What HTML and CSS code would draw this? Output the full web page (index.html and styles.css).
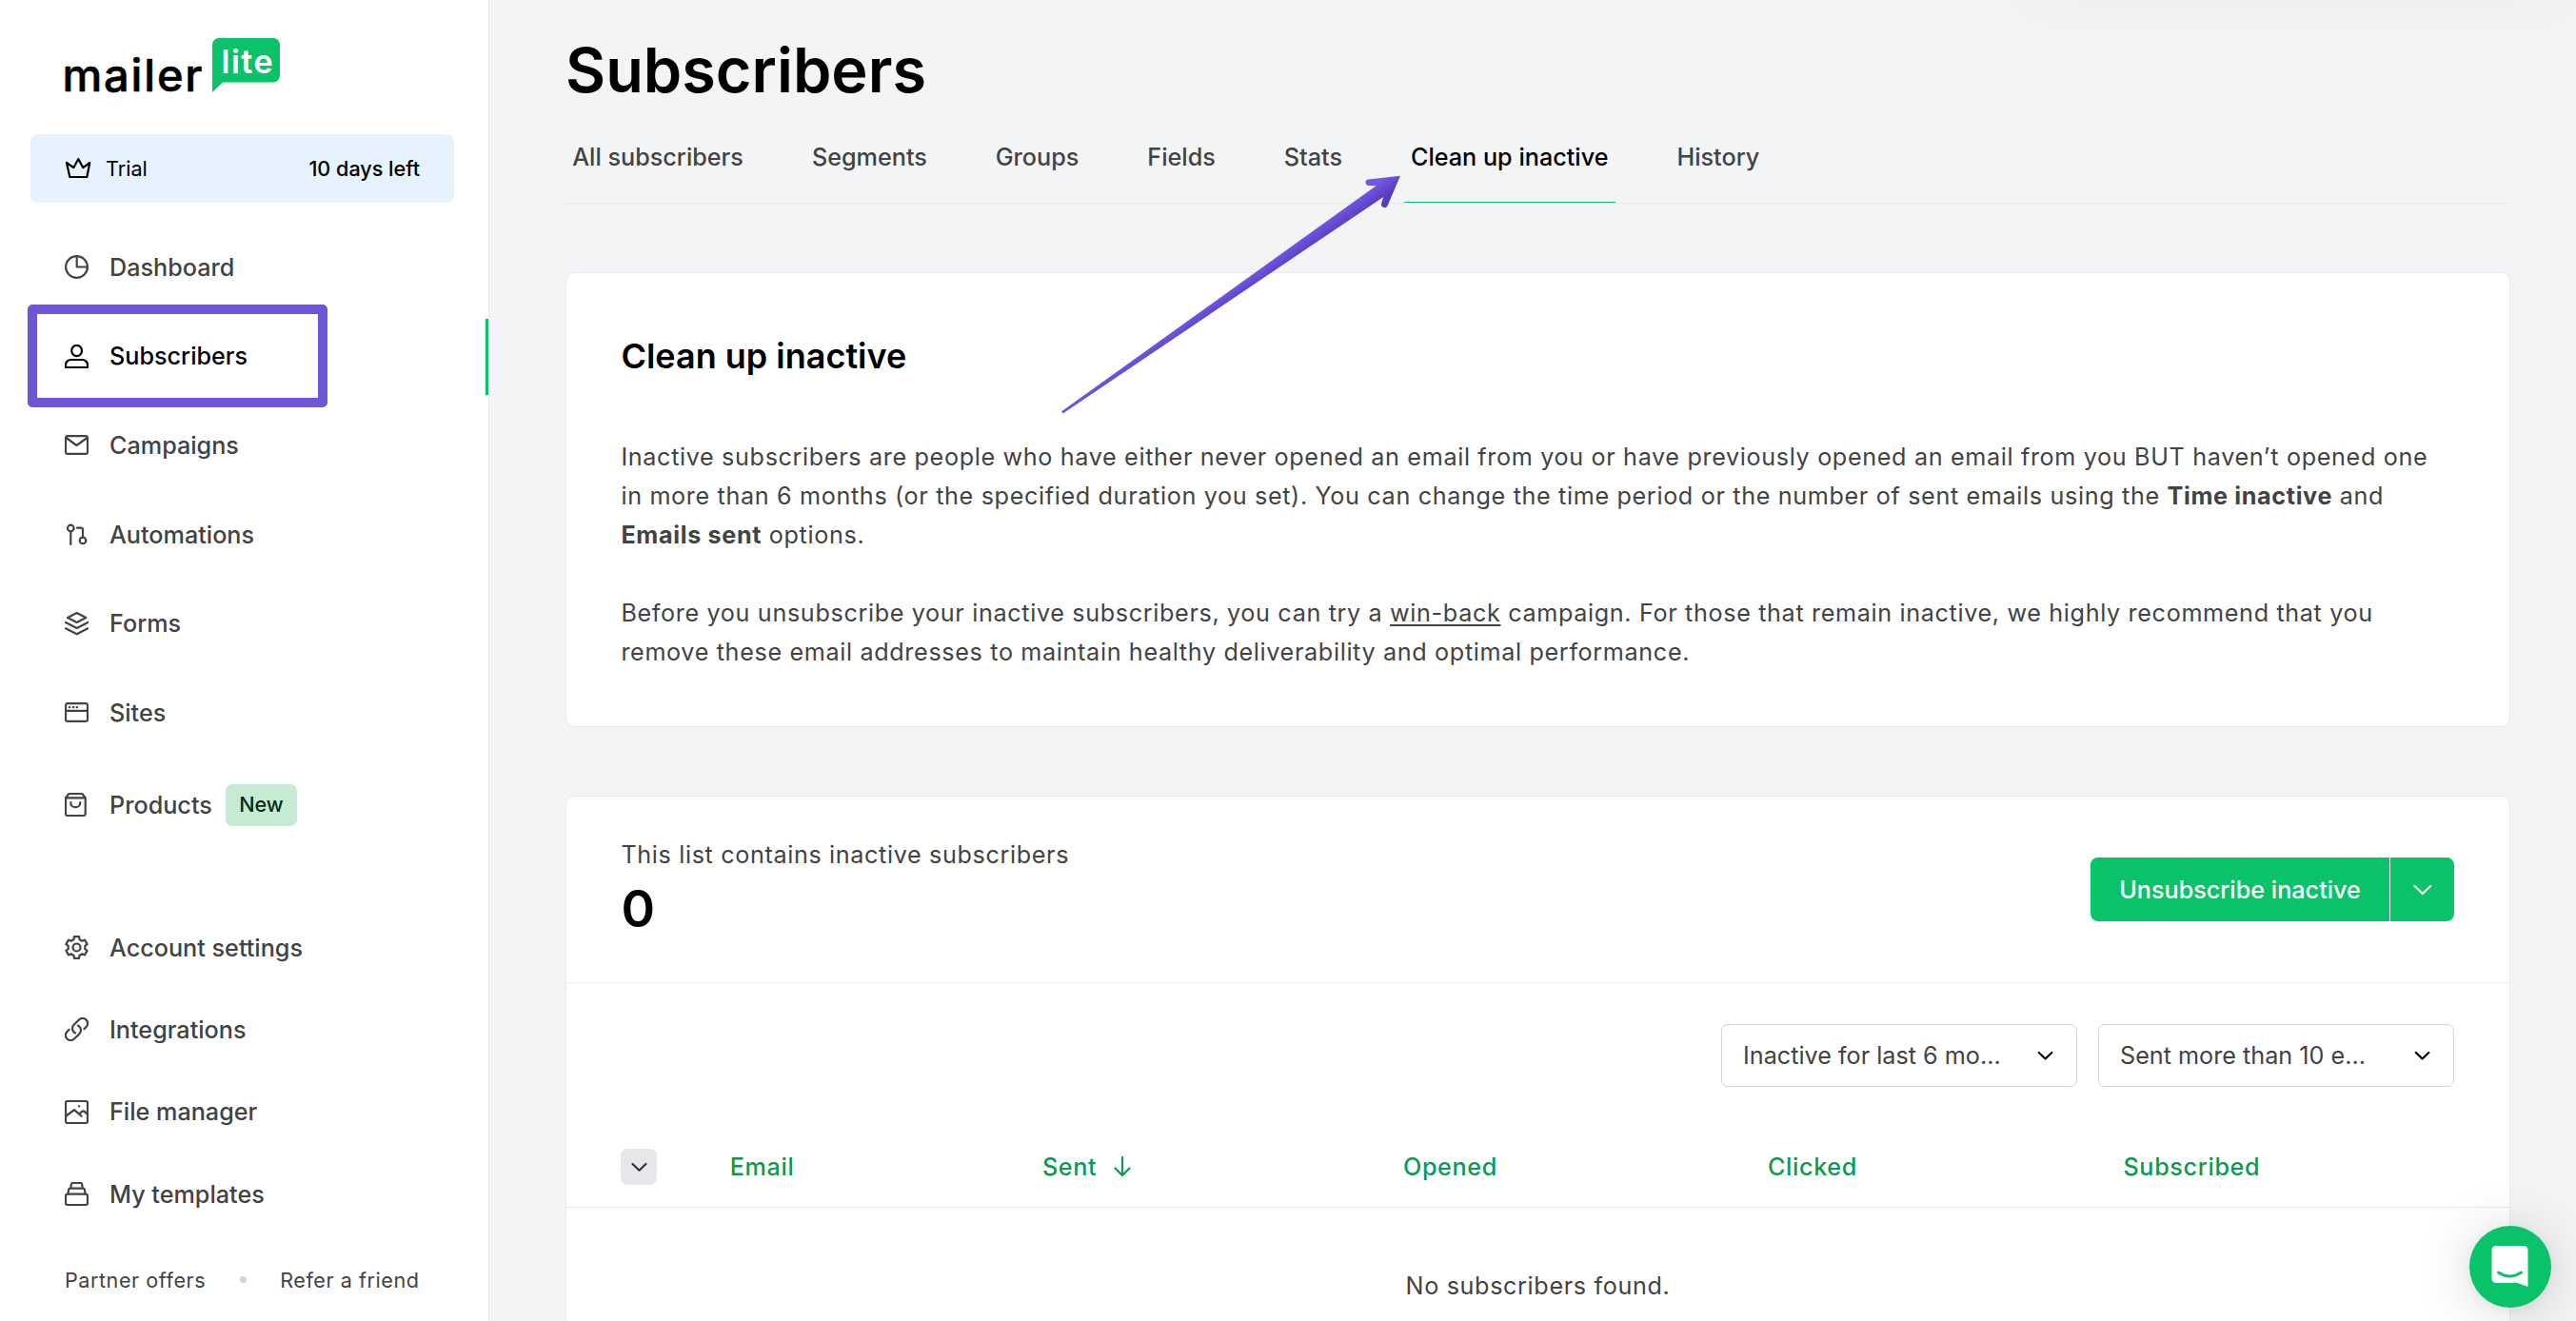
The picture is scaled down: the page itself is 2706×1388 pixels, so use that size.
FILE: index.html
```html
<!DOCTYPE html>
<html lang="en">
<head>
<meta charset="utf-8">
<title>Subscribers – Clean up inactive</title>
<link rel="stylesheet" href="styles.css">
</head>
<body>
<div class="app">
  <aside class="sidebar">
    <svg class="logo" width="240" height="62" viewBox="0 0 240 62" role="img" aria-label="mailerlite">
      <path class="logo-bubble" d="M162 0h57a7 7 0 0 1 7 7v32.500a7 7 0 0 1-7 7H166l-11 10.500V7a7 7 0 0 1 7-7z"/>
      <text class="logo-mailer" x="-2.500" y="56" textLength="147">mailer</text>
      <text class="logo-lite" x="164.500" y="37" textLength="54">lite</text>
    </svg>
    <div class="trial">
      <svg width="28" height="24" viewBox="0 0 28 24" class="icon"><path d="M2 6l3.300 15h18l3-15-7 5.200L14.300 2 9.300 11.200z"/></svg>
      <span class="trial-name">Trial</span>
      <span class="trial-left">10 days left</span>
    </div>
    <nav class="nav">
      <a class="nav-item"><svg class="icon" width="25" height="25" viewBox="0 0 25 25"><circle cx="12.500" cy="12.500" r="11.400"/><path d="M12.700 1.500v11H24"/></svg>Dashboard</a>
      <a class="nav-item active"><svg class="icon" width="25" height="25" viewBox="0 0 25 25"><ellipse cx="12.600" cy="6.500" rx="5.400" ry="5.700"/><path d="M1 24v-2.500a5.500 5.500 0 0 1 5.500-5.500h12a5.500 5.500 0 0 1 5.500 5.500V24z"/></svg>Subscribers<span class="highlight"></span></a>
      <a class="nav-item"><svg class="icon" width="25" height="25" viewBox="0 0 25 25"><rect x="1" y="3.200" width="23" height="18.700" rx="2"/><path d="M1.500 5l11 8 11-8"/></svg>Campaigns</a>
      <a class="nav-item"><svg class="icon" width="25" height="25" viewBox="0 0 25 25"><circle cx="6.300" cy="6" r="3.300"/><path d="M6.300 9.500v13.500M13 5.700h4a2 2 0 0 1 2 2v7.500"/><circle cx="19" cy="18.900" r="3.300"/></svg>Automations</a>
      <a class="nav-item"><svg class="icon" width="25" height="25" viewBox="0 0 25 25"><path d="M12.700 1.100l9.600 5-9.600 4.900L3 6.100zM1 10.900l11.700 6 11.600-6M1 17.300l11.700 6 11.600-6"/></svg>Forms</a>
      <a class="nav-item"><svg class="icon" width="25" height="25" viewBox="0 0 25 25"><rect x="1" y="3.200" width="23" height="18.700" rx="2"/><path d="M1 10.900h23"/><path d="M4.800 7.200h.4M8.800 7.200h.4M12.600 7.200h.4"/></svg>Sites</a>
      <a class="nav-item"><svg class="icon" width="25" height="25" viewBox="0 0 25 25"><path d="M1 5.300L4 1.500Q4.400 1 5 1h12.700q.6 0 1 .5l3 3.800V22a2 2 0 0 1-2 2H3a2 2 0 0 1-2-2zM1 5.300h20.700M6.300 10.200a5 5 0 0 0 10 0"/></svg>Products<span class="badge">New</span></a>
    </nav>
    <nav class="nav nav-secondary">
      <a class="nav-item"><svg class="icon" width="25" height="25" viewBox="0 0 25 25"><path d="M9.600 4L9.900 1.200h5.200L15.400 4l3 1.700 2.600-1.100 2.600 4.500-2.300 1.700v3.400l2.300 1.700-2.600 4.500-2.600-1.100-3 1.700-.3 2.800H9.900L9.600 21l-3-1.700L4 20.400l-2.600-4.500 2.300-1.700v-3.400L1.400 9.100 4 4.600l2.600 1.100z"/><circle cx="12.500" cy="12.500" r="4"/></svg>Account settings</a>
      <a class="nav-item"><svg class="icon" width="25" height="25" viewBox="1.500 1.500 21 21"><path stroke-width="1.850" d="M13.190 8.688a4.500 4.500 0 0 1 1.242 7.244l-4.500 4.500a4.500 4.500 0 0 1-6.364-6.364l1.757-1.757m13.350-.622l1.757-1.757a4.500 4.500 0 0 0-6.364-6.364l-4.500 4.500a4.500 4.500 0 0 0 1.242 7.244"/></svg>Integrations</a>
      <a class="nav-item"><svg class="icon" width="25" height="25" viewBox="0 0 25 25"><rect x="1" y="1" width="23" height="23" rx="2"/><path d="M1.500 16.500L10 10.200l7.500 6.500M15.800 15.200l.8-2.200q2.600-2.600 4.700-.6l2.700 2.600M14.900 6.300h.4"/></svg>File manager</a>
      <a class="nav-item"><svg class="icon" width="25" height="25" viewBox="0 0 25 25"><rect x="1" y="12.700" width="23" height="11.300" rx="2"/><path d="M3.500 12.500l.6-4.600q.3-1.300 1.600-1.300h13.600q1.300 0 1.600 1.300l.6 4.600M6.200 6.300l.6-3.900Q7.100 1 8.400 1h8.200q1.300 0 1.600 1.400l.6 3.900"/></svg>My templates</a>
    </nav>
    <div class="side-links"><a>Partner offers</a><span class="dot"></span><a>Refer a friend</a></div>
  </aside>

  <main class="main">
    <h1 class="title">Subscribers</h1>
    <div class="tabs">
      <a class="tab">All subscribers</a>
      <a class="tab">Segments</a>
      <a class="tab">Groups</a>
      <a class="tab">Fields</a>
      <a class="tab">Stats</a>
      <a class="tab current">Clean up inactive</a>
      <a class="tab">History</a>
    </div>

    <section class="card intro">
      <h2 class="intro-title">Clean up inactive</h2>
      <p class="text">Inactive subscribers are people who have either never opened an email from you or have previously opened an email from you BUT haven’t opened one in more than 6 months (or the specified duration you set). You can change the time period or the number of sent emails using the <b>Time inactive</b> and <b>Emails sent</b> options.</p>
      <p class="text">Before you unsubscribe your inactive subscribers, you can try a <a class="link">win-back</a> campaign. For those that remain inactive, we highly recommend that you remove these email addresses to maintain healthy deliverability and optimal performance.</p>
    </section>

    <section class="card list">
      <header class="list-head">
        <div>
          <div class="list-label">This list contains inactive subscribers</div>
          <div class="count">0</div>
        </div>
        <div class="split-button">
          <button class="btn">Unsubscribe inactive</button>
          <button class="btn btn-toggle" aria-label="More"><svg class="icon" width="20" height="12" viewBox="0 0 20 12"><path d="M1.500 2l8.300 8 8.300-8"/></svg></button>
        </div>
      </header>
      <div class="filters">
        <div class="select"><span>Inactive for last 6 mo...</span><svg class="icon" width="17" height="11" viewBox="0 0 17 11"><path d="M1.800 2l6.800 6.500L15.300 2"/></svg></div>
        <div class="select"><span>Sent more than 10 e...</span><svg class="icon" width="17" height="11" viewBox="0 0 17 11"><path d="M1.800 2l6.800 6.500L15.300 2"/></svg></div>
      </div>
      <div class="table-head">
        <span class="check"><svg class="icon" width="17" height="11" viewBox="0 0 17 11"><path d="M1.500 2l7 6.700L15.500 2"/></svg></span>
        <span>Email</span>
        <span class="sorted">Sent<svg class="icon" width="18" height="22" viewBox="0 0 18 22"><path d="M9 1v19M1.500 12.500L9 20l7.500-7.500"/></svg></span>
        <span>Opened</span>
        <span>Clicked</span>
        <span>Subscribed</span>
      </div>
      <div class="empty">No subscribers found.</div>
    </section>
  </main>
</div>

<div class="top-shade"></div>

<svg class="pointer" width="370" height="262" viewBox="1108 178 370 262">
  <defs>
    <linearGradient id="pointer-fill" gradientUnits="userSpaceOnUse" x1="1444" y1="194" x2="1454" y2="208">
      <stop offset="0" stop-color="#7359e2"/><stop offset="1" stop-color="#583cc0"/>
    </linearGradient>
  </defs>
  <path fill="url(#pointer-fill)" d="M1115.200 432.200L1445.500 195.200l-7.500-.2a3.300 3.300 0 0 1-.3-6.600L1471 184.800l-13.500 31.500a3.500 3.500 0 0 1-6.600-1.800l2.300-7.600L1116.500 434.500z"/>
</svg>

<button class="chat" aria-label="Chat">
  <svg width="86" height="86" viewBox="0 0 86 86">
    <path fill="#fff" d="M28 21h29a4.500 4.500 0 0 1 4.500 4.500V64l-11-4H28a4.500 4.500 0 0 1-4.500-4.500v-30A4.500 4.500 0 0 1 28 21z"/>
    <path class="smile" d="M30.500 49q12 8 24 0"/>
  </svg>
</button>
</body>
</html>
```
FILE: styles.css
```css
* { box-sizing: border-box; }

body {
  margin: 0;
  height: 1388px;
  overflow: hidden;
  position: relative;
  background: #f3f4f6;
  color: #434343;
  font: 400 25.2px/36px Inter, sans-serif;
}

h1, h2, p { margin: 0; }
button { border: 0; font: inherit; color: inherit; padding: 0; }

.icon {
  flex: none;
  fill: none;
  stroke: currentColor;
  stroke-width: 2.2;
  stroke-linecap: round;
  stroke-linejoin: round;
}

.app { display: flex; height: 1388px; }

/* Sidebar */
.sidebar {
  flex: none;
  width: 514px;
  padding-top: 40px;
  background: #fff;
  border-right: 1px solid #e6e9ed;
}
.logo { display: block; margin-left: 68px; overflow: visible; }
.logo-bubble { fill: #09c269; }
.logo-mailer { font-size: 47px; font-weight: 500; fill: #000; stroke: #000; stroke-width: .6; stroke-linejoin: round; }
.logo-lite { font-size: 34px; font-weight: 600; fill: #fff; }

.trial {
  display: flex;
  align-items: center;
  height: 72px;
  margin: 39px 36px 0 32px;
  padding: 0 36px;
  border-radius: 8px;
  background: #e7f2ff;
  color: #000;
  font-size: 21.6px;
}
.trial-name { margin-left: 15px; }
.trial-left { margin-left: auto; font-weight: 500; }

.nav { padding-top: 21px; }
.nav-secondary { padding-top: 56px; }
.nav-item {
  position: relative;
  display: flex;
  align-items: center;
  padding: 28.8px 0 28.8px 68px;
  font-weight: 500;
}
.nav-item .icon { margin-right: 22px; }
.nav-secondary .nav-item { padding-top: 25.2px; padding-bottom: 25.2px; }
.nav-item.active { color: #000; }
.nav-item.active::after {
  content: "";
  position: absolute;
  right: 0;
  top: 7px;
  width: 3px;
  height: 80px;
  background: #09c269;
}
.highlight {
  position: absolute;
  left: 29px;
  top: -8px;
  width: 315px;
  height: 108px;
  border: 10px solid #6e56d6;
  border-radius: 5px;
}
.badge {
  margin-left: 14px;
  padding: 0 14.400px;
  border-radius: 7px;
  background: #c5ecd3;
  color: #05281a;
  font-size: 21.6px;
  line-height: 43.2px;
}
.side-links {
  display: flex;
  align-items: center;
  padding: 29px 0 0 68px;
  font-size: 21.6px;
  letter-spacing: .54px;
}
.dot { width: 7px; height: 7px; margin: 0 35.500px; border-radius: 50%; background: #d1d5db; }

/* Page header */
.main {
  flex: 1;
  display: flex;
  flex-direction: column;
  padding: 38px 69px 0 80px;
}
.title { font-size: 64.8px; line-height: 72px; font-weight: 600; color: #000; }
.tabs {
  display: flex;
  gap: 57.6px;
  border-bottom: 1px solid #e6e8ea;
}
.tab { padding: 37px 7.2px 29px; border-bottom: 1px solid transparent; font-weight: 500; }
.tab.current { color: #000; border-color: #09c269; }

/* Cards */
.card {
  margin-top: 72px;
  border: 1px solid #e8e9ec;
  border-radius: 9px;
  background: #fff;
}
.intro { padding: 65px 56.6px 57px 57.4px; }
.intro-title { margin-bottom: 64px; font-size: 36px; line-height: 44px; font-weight: 600; color: #000; }
.text { line-height: 41px; letter-spacing: .64px; }
.text + .text { margin-top: 41px; }
.text b { font-weight: 700; }
.link { text-decoration: underline; text-decoration-thickness: 2px; text-underline-offset: 3px; }

.list {
  flex: 1;
  border-bottom: 0;
  border-radius: 9px 9px 0 0;
}
.list-head {
  display: flex;
  justify-content: space-between;
  height: 196px;
  padding: 43px 58px 0 57.4px;
  border-bottom: 1px solid #f1f2f4;
}
.list-label { letter-spacing: .63px; }
.count { margin-top: 6px; font-size: 54px; line-height: 66px; font-weight: 600; color: #000; }

.split-button {
  display: flex;
  gap: 1px;
  height: 67px;
  margin-top: 21px;
  border-radius: 8px;
  overflow: hidden;
}
.btn { width: 314px; background: #09c269; color: #fff; font-weight: 500; }
.btn-toggle { display: flex; align-items: center; justify-content: center; width: 67px; }

.filters { display: flex; justify-content: flex-end; gap: 22px; padding: 43px 58px 0; }
.select {
  display: flex;
  align-items: center;
  justify-content: space-between;
  width: 374px;
  height: 66px;
  padding: 0 24px 0 22px;
  border: 1px solid #d1d5db;
  border-radius: 7px;
}
.select .icon { color: #000; }

.table-head {
  display: grid;
  grid-template-columns: 114.6px 328.2px 379px 383px 373.5px 1fr;
  align-items: center;
  padding: 65px 0 23px 57.2px;
  border-bottom: 1px solid #e6e7e9;
  color: #0a9b52;
  font-weight: 500;
  letter-spacing: .63px;
}
.check {
  display: flex;
  align-items: center;
  justify-content: center;
  width: 38px;
  height: 38px;
  border-radius: 7px;
  background: #e5e7eb;
  color: #333;
}
.sorted { display: flex; align-items: center; gap: 18px; }
.empty { padding-top: 64px; text-align: center; letter-spacing: .63px; }

/* Overlays */
.top-shade {
  position: absolute;
  left: 2120px;
  right: 0;
  top: -40px;
  height: 40px;
  box-shadow: 0 0 72px rgba(0, 0, 0, .045);
}
.pointer { position: absolute; left: 1108px; top: 178px; }
.chat {
  position: absolute;
  left: 2594px;
  top: 1288px;
  width: 86px;
  height: 86px;
  border-radius: 50%;
  background: #09c269;
  box-shadow: 0 2px 11px rgba(0, 0, 0, .06), 0 4px 58px rgba(0, 0, 0, .16);
}
.smile { fill: none; stroke: #09c269; stroke-width: 3; stroke-linecap: round; }
```
